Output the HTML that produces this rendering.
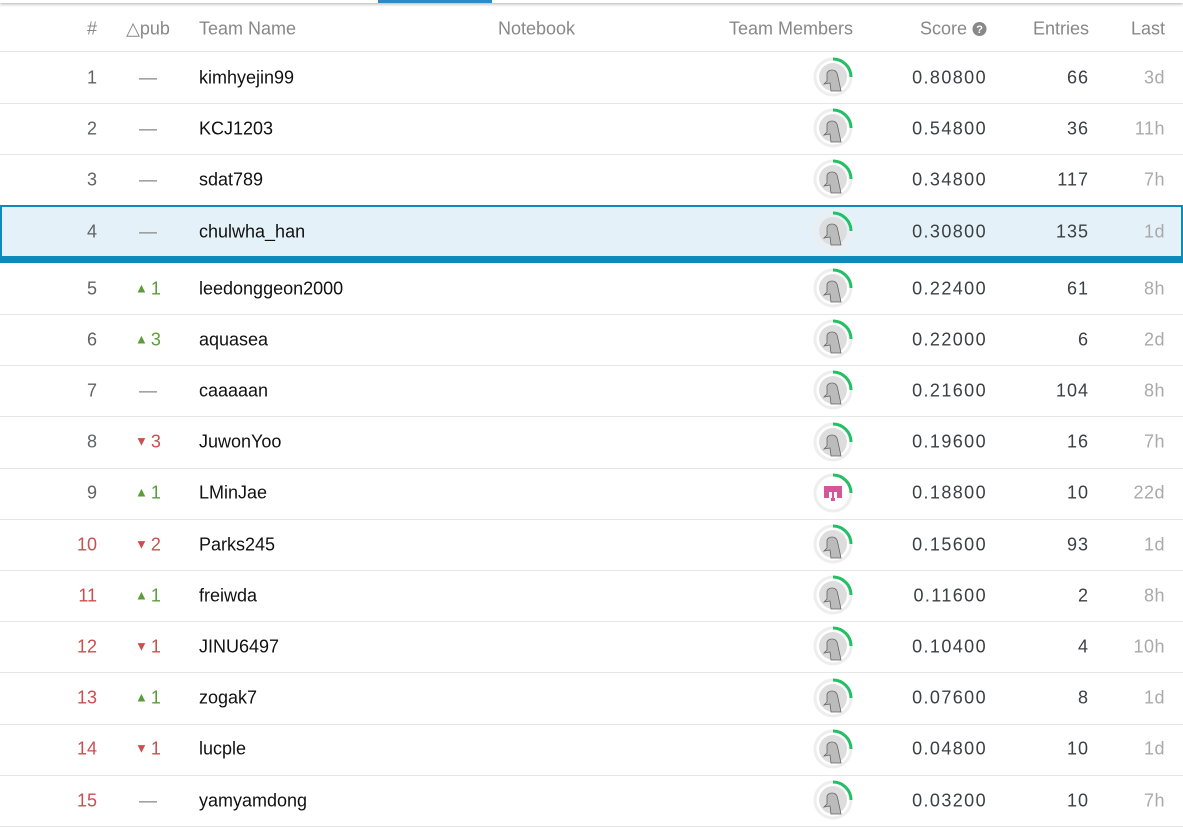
<!DOCTYPE html>
<html><head><style>
body{margin:0;width:1183px;height:802px;overflow:hidden;background:#fff;font-family:"Liberation Sans",sans-serif;position:relative}
.top{position:absolute;left:0;top:0;width:1183px;height:3px;background:#fff;box-shadow:0 1px 3px rgba(0,0,0,.35)}
.tab{position:absolute;left:378px;top:0;width:114px;height:3px;background:#2a8bc7}
.row{position:absolute;left:0;width:1183px;height:51px;border-bottom:1px solid #e6e6e6;font-size:18px;color:#202124}
.row>span{position:absolute;top:50%;transform:translateY(-50%);white-space:nowrap}
.hdr>span{top:29px}
.rk{right:1086px;color:#5f6368}
.pb{left:125px;width:46px;text-align:center;color:#888}
.nm{left:199px;color:#111}
.sc{right:196px;color:#3c4043;letter-spacing:1.4px}
.en{right:94px;color:#3c4043;letter-spacing:1px}
.ls{right:18px;color:#aaa;letter-spacing:.5px}
.hd{color:#888}
.up{color:#5a9e3a}.dn{color:#c9504f}
.red{color:#c9504f}
.tri{font-size:13px;vertical-align:2px;margin-right:3px}
.hl{background:#e4f1f8;box-shadow:inset 0 0 0 2px #0f88be;border-bottom:5px solid #0f88be;height:53px}
</style></head><body>
<div class="top"></div><div class="tab"></div>
<div class="row hdr" style="top:0;height:51px">
<span class="rk hd">#</span><span class="pb hd" style="left:120px;width:56px">△pub</span><span class="nm hd">Team Name</span>
<span class="hd" style="left:498px">Notebook</span><span class="hd" style="right:330px">Team Members</span>
<span class="hd" style="right:196px">Score <svg width="15" height="15" viewBox="0 0 16 16" style="vertical-align:-2px"><circle cx="8" cy="8" r="7.5" fill="#888"/><text x="8" y="12.5" font-size="12" font-weight="bold" fill="#fff" text-anchor="middle" font-family="Liberation Sans">?</text></svg></span>
<span class="hd" style="right:94px">Entries</span><span class="hd" style="right:18px">Last</span>
</div>
<div id="rows"></div>
<script>
const d=[[1,'-','kimhyejin99','0.80800',66,'3d'],[2,'-','KCJ1203','0.54800',36,'11h'],[3,'-','sdat789','0.34800',117,'7h'],[4,'-','chulwha_han','0.30800',135,'1d'],[5,'u1','leedonggeon2000','0.22400',61,'8h'],[6,'u3','aquasea','0.22000',6,'2d'],[7,'-','caaaaan','0.21600',104,'8h'],[8,'d3','JuwonYoo','0.19600',16,'7h'],[9,'u1','LMinJae','0.18800',10,'22d'],[10,'d2','Parks245','0.15600',93,'1d'],[11,'u1','freiwda','0.11600',2,'8h'],[12,'d1','JINU6497','0.10400',4,'10h'],[13,'u1','zogak7','0.07600',8,'1d'],[14,'d1','lucple','0.04800',10,'1d'],[15,'-','yamyamdong','0.03200',10,'7h']];
const tops=[52,103,154,205,263];
let h='';
d.forEach((r,i)=>{
 let t=i<5?tops[i]:263+(i-4)*51.2;
 let pb=r[1]=='-'?'<span class="pb">—</span>':(r[1][0]=='u'?'<span class="pb up"><span class="tri">▲</span>'+r[1].slice(1)+'</span>':'<span class="pb dn"><span class="tri">▼</span>'+r[1].slice(1)+'</span>');
 let inner=r[0]==9?'<rect x="11" y="13" width="18" height="12" fill="#d6569a"/><rect x="16" y="19" width="3" height="6" fill="#fff"/><rect x="21" y="19" width="3" height="6" fill="#fff"/><rect x="18" y="25" width="4" height="3" fill="#d6569a"/>':'<circle cx="20" cy="20" r="14" fill="#ddd"/><path d="M14 16c2-4 8-4 10 0l1 4 3 14h-10l-1-8-6 1 3-3z" fill="#bbb" stroke="#666" stroke-width=".8"/>';
 let av='<svg style="position:absolute;top:'+(r[0]==4?6:5)+'px;left:813px;width:40px;height:40px" viewBox="0 0 40 40"><circle cx="20" cy="20" r="18" fill="none" stroke="#eee" stroke-width="3"/><path d="M20 2A18 18 0 0 1 38 20" fill="none" stroke="#20c063" stroke-width="3"/>'+(r[0]==9?'<circle cx="20" cy="20" r="15" fill="#fff"/>':'')+inner+'</svg>';
 h+='<div class="row'+(r[0]==4?' hl':'')+'" style="top:'+t+'px"><span class="rk'+(r[0]>=10?' red':'')+'">'+r[0]+'</span>'+pb+'<span class="nm">'+r[2]+'</span>'+av+'<span class="sc">'+r[3]+'</span><span class="en">'+r[4]+'</span><span class="ls">'+r[5]+'</span></div>';
});
document.getElementById('rows').innerHTML=h;
</script>
</body></html>
